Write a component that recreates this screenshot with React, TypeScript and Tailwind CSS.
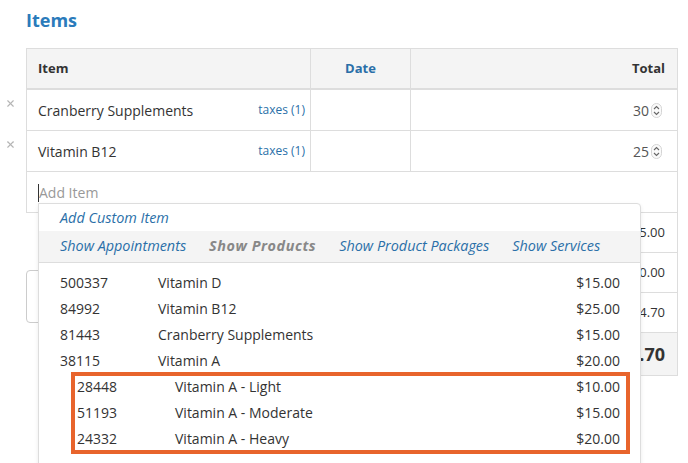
import { X } from 'lucide-react';

const rows = [
    { name: 'Cranberry Supplements', total: '30' },
    { name: 'Vitamin B12', total: '25' },
];

const products = [
    { code: '500337', name: 'Vitamin D', price: '$15.00', child: false },
    { code: '84992', name: 'Vitamin B12', price: '$25.00', child: false },
    { code: '81443', name: 'Cranberry Supplements', price: '$15.00', child: false },
    { code: '38115', name: 'Vitamin A', price: '$20.00', child: false },
    { code: '28448', name: 'Vitamin A - Light', price: '$10.00', child: true },
    { code: '51193', name: 'Vitamin A - Moderate', price: '$15.00', child: true },
    { code: '24332', name: 'Vitamin A - Heavy', price: '$20.00', child: true },
];

// labels sit behind the dropdown, only the values show
const totals = ['$55.00', '$0.00', '$4.70'];

const Spinner = () => (
    <svg width="11" height="15" viewBox="0 0 11 15" className="ml-[2px]">
        <rect x="0.5" y="0.5" width="10" height="14" rx="5" fill="#fafafa" stroke="#d4d4d4" />
        <path d="M3 6 L5.5 3.5 L8 6" fill="none" stroke="#666" strokeWidth="1.1" />
        <path d="M3 9 L5.5 11.5 L8 9" fill="none" stroke="#666" strokeWidth="1.1" />
    </svg>
);

export default function App() {
    return (
        <div className="relative w-[688px] h-[463px] overflow-hidden bg-white font-['Open_Sans',sans-serif] text-[#333]">
            <div className="pl-[26px] pr-[10px] pt-[8px]">
                <h2 className="text-[18px] leading-[24px] font-bold text-[#2b7bbb]">Items</h2>

                {/* Items table */}
                <div className="mt-[16px] w-[652px] border border-[#ddd]">
                    <div className="flex h-[41px] bg-[#f4f4f4] border-b-2 border-[#ddd] text-[13px] font-bold">
                        <div className="w-[284px] flex items-center pl-[11px] border-r border-[#ddd]">Item</div>
                        <div className="w-[100px] flex items-center justify-center border-r border-[#ddd] text-[#2a6fa8]">Date</div>
                        <div className="flex-1 flex items-center justify-end pr-[12px]">Total</div>
                    </div>
                    {rows.map((row) => (
                        <div key={row.name} className="relative flex h-[41px] border-b border-[#ddd]">
                            <X size={11} strokeWidth={2.5} className="absolute left-[-22px] top-[8px] text-[#b5b5b5]" />
                            <div className="w-[284px] flex items-center justify-between pl-[11px] pr-[5px] border-r border-[#ddd]">
                                <span className="text-[14px]">{row.name}</span>
                                <span className="text-[12px] text-[#2a6fa8]">taxes (1)</span>
                            </div>
                            <div className="w-[100px] border-r border-[#ddd]" />
                            <div className="flex-1 flex items-center justify-end pr-[15px] text-[14px] text-[#555]">
                                {row.total}
                                <Spinner />
                            </div>
                        </div>
                    ))}
                    <div className="flex items-center h-[40px] pl-[11px] pt-[1px] text-[14px] text-[#999]">
                        <span className="border-l border-[#333] leading-[18px]">Add Item</span>
                    </div>
                </div>

                {/* Notes + totals */}
                <div className="flex w-[652px]">
                    <div className="flex-1 pt-[57px] pr-[20px]">
                        <div className="h-[53px] w-[300px] rounded-[4px] border border-[#ccc]" />
                    </div>
                    <div className="w-[268px] border-x border-[#ddd] text-[13px]">
                        {totals.map((v) => (
                            <div key={v} className="flex h-[40px] items-center justify-end px-[12px] border-b border-[#ddd]">
                                {v}
                            </div>
                        ))}
                        <div className="flex h-[43px] items-center justify-end px-[12px] bg-[#f4f4f4] border-b border-[#ddd] font-bold text-[18px]">
                            $59.70
                        </div>
                    </div>
                </div>
            </div>

            {/* Autocomplete dropdown */}
            <div className="absolute left-[38px] top-[203px] w-[603px] h-[280px] bg-white border border-[#ddd] rounded-tr-[4px] shadow-[0_2px_4px_rgba(0,0,0,0.08)]">
                <div className="h-[27px] flex items-center pl-[21px] text-[14.4px] italic text-[#2a6fa8]">Add Custom Item</div>
                <div className="h-[32px] flex items-center gap-[23px] pl-[21px] pb-[1px] bg-[#f4f4f4] border-b border-[#ddd] text-[14.4px] italic text-[#2a6fa8]">
                    <span>Show Appointments</span>
                    <span className="font-bold tracking-[0.55px] text-[#888]">Show Products</span>
                    <span>Show Product Packages</span>
                    <span>Show Services</span>
                </div>
                <div className="pt-[6px] text-[14px]">
                    {products.map((p) => (
                        <div key={p.code} className={`flex h-[26px] items-center pr-[20px] ${p.child ? 'pl-[38px]' : 'pl-[21px]'}`}>
                            <span className="w-[98px]">{p.code}</span>
                            <span className="flex-1">{p.name}</span>
                            <span>{p.price}</span>
                        </div>
                    ))}
                </div>
            </div>

            {/* Highlight annotation */}
            <div className="absolute left-[71px] top-[372px] w-[559px] h-[82px] border-4 border-[#e8642c]" />
        </div>
    );
}
